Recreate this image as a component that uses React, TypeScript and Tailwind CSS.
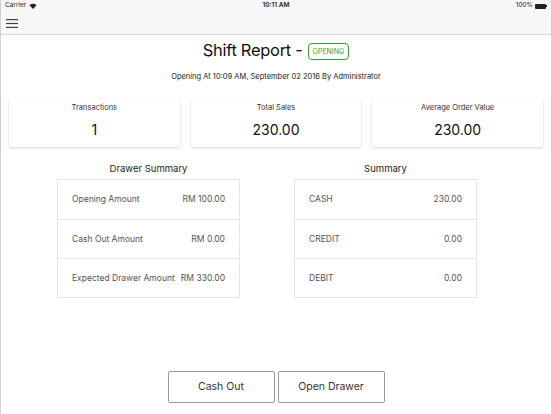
import React from 'react';

const stats = [
  { label: 'Transactions', value: '1' },
  { label: 'Total Sales', value: '230.00' },
  { label: 'Average Order Value', value: '230.00' },
];

const drawer = [
  { label: 'Opening Amount', value: 'RM 100.00' },
  { label: 'Cash Out Amount', value: 'RM 0.00' },
  { label: 'Expected Drawer Amount', value: 'RM 330.00' },
];

const summary = [
  { label: 'CASH', value: '230.00' },
  { label: 'CREDIT', value: '0.00' },
  { label: 'DEBIT', value: '0.00' },
];

function Table({ title, rows }: { title: string; rows: { label: string; value: string }[] }) {
  return (
    <div className="w-[183px]">
      <h3 className="text-center text-[9.5px] leading-[13px] text-[#222]">{title}</h3>
      <div className="mt-[4px] border border-[#e6e6e6]">
        {rows.map((r, i) => (
          <div
            key={r.label}
            className={`flex h-[39px] items-center justify-between px-[14px] text-[8.5px] text-[#555] ${i > 0 ? 'border-t border-[#e6e6e6]' : ''}`}
          >
            <span>{r.label}</span>
            <span>{r.value}</span>
          </div>
        ))}
      </div>
    </div>
  );
}

export default function App() {
  return (
    <div
      className="flex h-[414px] w-[552px] flex-col overflow-hidden border-x border-[#d0d0d0] bg-white"
      style={{ fontFamily: 'Inter, "Liberation Sans", sans-serif' }}
    >
      {/* Status + nav bar */}
      <div className="border-b border-[#d8d8d8] bg-[#f7f7f7]">
        <div className="relative flex h-[12px] items-center justify-between px-[4px] text-[6.5px] text-[#222]">
          <div className="flex items-center gap-[3px]">
            <span>Carrier</span>
            <svg width="8" height="6" viewBox="0 0 8 6">
              <path d="M4 6 L0.5 2.2 A5 5 0 0 1 7.5 2.2 Z" fill="#222" />
            </svg>
          </div>
          <span className="absolute left-1/2 -translate-x-1/2 font-semibold">10:11 AM</span>
          <div className="flex items-center gap-[2px]">
            <span>100%</span>
            <div className="flex items-center">
              <div className="h-[5px] w-[11px] rounded-[1px] bg-[#222]" />
              <div className="h-[2px] w-[1px] bg-[#222]" />
            </div>
          </div>
        </div>
        <div className="flex h-[22px] items-center px-[5px]">
          <svg width="12" height="9" viewBox="0 0 12 9">
            <rect x="0" y="0" width="12" height="1.2" fill="#444" />
            <rect x="0" y="3.9" width="12" height="1.2" fill="#444" />
            <rect x="0" y="7.8" width="12" height="1.2" fill="#444" />
          </svg>
        </div>
      </div>

      {/* Header */}
      <div className="mt-[2px] flex items-center justify-center gap-[5px]">
        <h1 className="text-[16.5px] leading-[26px] tracking-[-0.3px] text-[#111]">Shift Report -</h1>
        <span className="mt-[2px] rounded-[4px] border-[1.5px] border-[#3a9a3a] px-[4px] py-[3px] text-[7px] leading-[9px] text-[#3a9a3a]">
          OPENING
        </span>
      </div>
      <p className="mt-[9px] text-center text-[7.5px] leading-[10px] text-[#222]">
        Opening At 10:09 AM, September 02 2016 By Administrator
      </p>

      {/* Stat cards */}
      <div className="mt-[17px] grid grid-cols-3 gap-[11px] px-[8px]">
        {stats.map((s) => (
          <div key={s.label} className="flex h-[48px] flex-col items-center rounded-[2px] bg-white shadow-[0_1px_3px_rgba(0,0,0,0.18)]">
            <span className="mt-[4px] text-[7.5px] leading-[10px] text-[#333]">{s.label}</span>
            <span className="mt-[8px] text-[14px] leading-[17px] text-[#111]">{s.value}</span>
          </div>
        ))}
      </div>

      {/* Tables */}
      <div className="mt-[15px] flex gap-[54px] pl-[56px]">
        <Table title="Drawer Summary" rows={drawer} />
        <Table title="Summary" rows={summary} />
      </div>

      {/* Actions */}
      <div className="mt-auto mb-[11px] flex justify-center gap-[3px]">
        <button className="h-[32px] w-[107px] rounded-[2px] border border-[#999] bg-white text-[10.5px] text-[#333]">
          Cash Out
        </button>
        <button className="h-[32px] w-[107px] rounded-[2px] border border-[#999] bg-white text-[10.5px] text-[#333]">
          Open Drawer
        </button>
      </div>
    </div>
  );
}
